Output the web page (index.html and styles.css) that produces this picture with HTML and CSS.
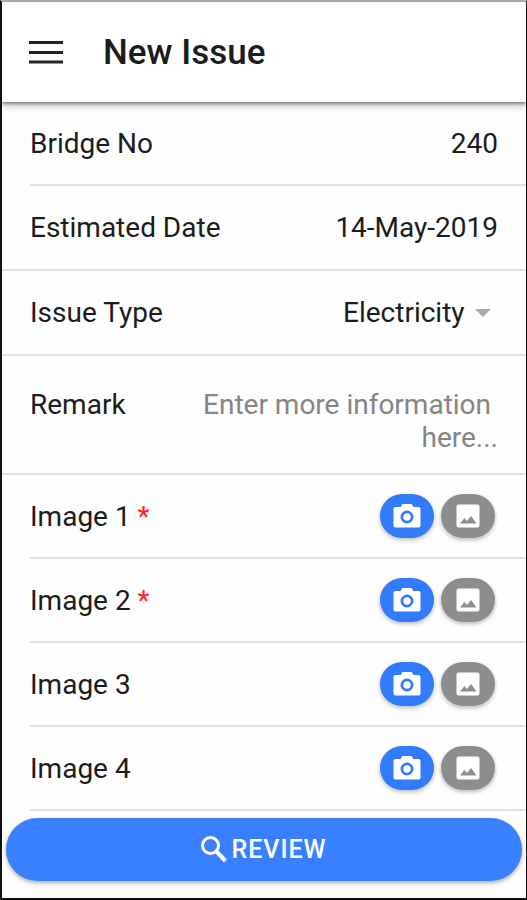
FILE: index.html
```html
<!DOCTYPE html>
<html lang="en">
<head>
  <meta charset="utf-8">
  <meta name="viewport" content="width=device-width, initial-scale=1">
  <title>New Issue</title>
  <link rel="stylesheet" href="styles.css">
</head>
<body>

  <!-- shared icons -->
  <svg class="sprite" aria-hidden="true">
    <symbol id="camera" viewBox="0 0 28 24">
      <path fill-rule="evenodd" d="M9.500 0h9l2 3H25.500a2 2 0 0 1 2 2v16.500a2 2 0 0 1-2 2h-23a2 2 0 0 1-2-2V5a2 2 0 0 1 2-2h5zM14 6.500a6.500 6.500 0 1 0 0 13a6.500 6.500 0 0 0 0-13z"/>
      <circle cx="14" cy="13" r="3.700"/>
    </symbol>
    <symbol id="picture" viewBox="0 0 24 24">
      <path fill-rule="evenodd" d="M2.500 0.500h19a2 2 0 0 1 2 2v19a2 2 0 0 1-2 2h-19a2 2 0 0 1-2-2v-19a2 2 0 0 1 2-2zM4 19.500h16.500l-5.500-7.500-4 5-2.500-3z"/>
    </symbol>
  </svg>

  <header class="toolbar">
    <button type="button" class="menu-btn" aria-label="Menu">
      <svg viewBox="0 0 34 24" width="34" height="24">
        <path d="M0 2.500h34M0 12.500h34M0 22h34" stroke="#222" stroke-width="3"/>
      </svg>
    </button>
    <h1>New Issue</h1>
  </header>

  <form class="issue-form">
    <div class="item inset">
      <label for="bridge">Bridge No</label>
      <input type="text" id="bridge" value="240">
    </div>
    <div class="item">
      <label for="date">Estimated Date</label>
      <input type="text" id="date" value="14-May-2019">
    </div>
    <div class="item">
      <label for="type">Issue Type</label>
      <div class="select">
        <select id="type">
          <option>Electricity</option>
        </select>
        <span class="arrow"></span>
      </div>
    </div>
    <div class="item remark">
      <label for="remark">Remark</label>
      <textarea id="remark" rows="2" placeholder="Enter more information &#10;here..."></textarea>
    </div>

    <div class="item image inset">
      <span>Image 1 <span class="required">*</span></span>
      <div class="actions">
        <button type="button" class="round camera" aria-label="Take image 1"><svg><use href="#camera"/></svg></button>
        <button type="button" class="round picture" aria-label="Choose image 1"><svg><use href="#picture"/></svg></button>
      </div>
    </div>
    <div class="item image inset">
      <span>Image 2 <span class="required">*</span></span>
      <div class="actions">
        <button type="button" class="round camera" aria-label="Take image 2"><svg><use href="#camera"/></svg></button>
        <button type="button" class="round picture" aria-label="Choose image 2"><svg><use href="#picture"/></svg></button>
      </div>
    </div>
    <div class="item image inset">
      <span>Image 3</span>
      <div class="actions">
        <button type="button" class="round camera" aria-label="Take image 3"><svg><use href="#camera"/></svg></button>
        <button type="button" class="round picture" aria-label="Choose image 3"><svg><use href="#picture"/></svg></button>
      </div>
    </div>
    <div class="item image inset">
      <span>Image 4</span>
      <div class="actions">
        <button type="button" class="round camera" aria-label="Take image 4"><svg><use href="#camera"/></svg></button>
        <button type="button" class="round picture" aria-label="Choose image 4"><svg><use href="#picture"/></svg></button>
      </div>
    </div>

    <button type="submit" class="review">
      <svg viewBox="0 0 26 27" width="26" height="27">
        <circle cx="9.500" cy="9.500" r="8" fill="none" stroke="#fff" stroke-width="3"/>
        <path d="M15 15l9.500 10" stroke="#fff" stroke-width="4"/>
      </svg>
      REVIEW
    </button>
  </form>

</body>
</html>
```
FILE: styles.css
```css
* {
  box-sizing: border-box;
}
body {
  margin: 0;
  min-height: 100vh;
  border: 2px solid #111;
  border-top-color: #aaa;
  border-right-width: 1px;
  background-color: #fefefe;
  color: #1c1c1c;
  font-family: Roboto, sans-serif;
  font-size: 28px;
  line-height: 33px;
}
input, select, textarea, button {
  font: inherit;
  color: inherit;
  border: 0;
  padding: 0;
  margin: 0;
  background: none;
}
.sprite {
  display: none;
}

/* toolbar */
.toolbar {
  display: flex;
  align-items: center;
  gap: 40px;
  height: 100px;
  padding: 0 27px;
  background-color: #fff;
  box-shadow: 0 2px 3px #888, 0 4px 8px #ccc;
}
.menu-btn {
  display: flex;
}
h1 {
  margin: 0;
  font-size: 35px;
  font-weight: 500;
}

/* form rows */
.item {
  display: flex;
  align-items: center;
  justify-content: space-between;
  gap: 16px;
  min-height: 85px;
  padding: 0 28px;
  border-bottom: 2px solid #e2e2e2;
}
.inset {
  min-height: 84px;
  margin-left: 28px;
  padding-left: 0;
}
.item input {
  flex: 1;
  min-width: 0;
  text-align: right;
}
.select {
  display: flex;
  align-items: center;
  gap: 10px;
  padding-right: 7px;
}
select {
  appearance: none;
}
.arrow {
  border: 8px solid transparent;
  border-top-color: #aaa;
  border-bottom: 0;
}
.remark {
  align-items: flex-start;
  padding-top: 32px;
  padding-bottom: 19px;
}
textarea {
  display: block;
  flex: 1;
  min-width: 0;
  resize: none;
  overflow: hidden;
  text-align: right;
}
textarea::placeholder {
  color: #858585;
}

/* image rows */
.image {
  padding-right: 31px;
}
.required {
  color: #f22;
}
.actions {
  display: flex;
  gap: 7px;
}
.round {
  display: flex;
  align-items: center;
  justify-content: center;
  width: 54px;
  height: 44px;
  border-radius: 22px;
  box-shadow: 0 2px 4px #bbb;
}
.round svg {
  width: 28px;
  height: 24px;
  fill: #fff;
}
.camera {
  background-color: #327bfd;
}
.picture {
  background-color: #8c8d8d;
}

.review {
  display: flex;
  align-items: center;
  justify-content: center;
  gap: 4px;
  width: calc(100% - 8px);
  height: 63px;
  margin: 7px 4px 0;
  border-radius: 32px;
  background-color: #3880ff;
  color: #fff;
  font-size: 25px;
  font-weight: 500;
  letter-spacing: 1px;
  box-shadow: 0 2px 4px #aaa;
}
```
